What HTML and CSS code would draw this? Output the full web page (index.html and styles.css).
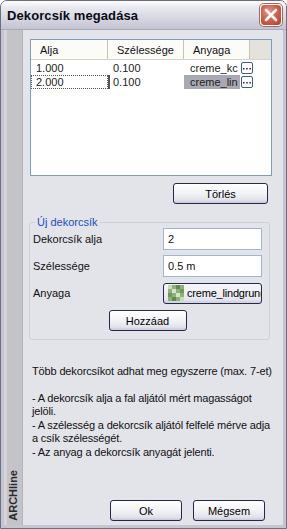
FILE: index.html
```html
<!DOCTYPE html>
<html>
<head>
<meta charset="utf-8">
<link rel="stylesheet" href="styles.css">
</head>
<body>
<div class="window">
  <div class="titlebar">
    <span class="title">Dekorcsík megadása</span>
    <span class="close"><svg width="14" height="14" viewBox="0 0 14 14"><path d="M2 2 L12 12 M12 2 L2 12" stroke="#fff" stroke-width="2.6" stroke-linecap="round"/></svg></span>
  </div>
  <div class="body">
    <div class="sidebar"><span class="brand">ARCHline</span></div>
    <div class="content">
      <div class="list">
        <div class="lhead">
          <span class="hc c1">Alja</span>
          <span class="hc c2">Szélessége</span>
          <span class="hc c3">Anyaga</span>
          <span class="hc c4"></span>
        </div>
        <div class="lrow">
          <span class="cell c1">1.000</span>
          <span class="cell c2">0.100</span>
          <span class="cell c3"><span class="mat">creme_kc</span><span class="ell"><svg width="8" height="3" viewBox="0 0 8 3"><rect x="0" y="1" width="1.5" height="1.5" fill="#223"/><rect x="3.2" y="1" width="1.5" height="1.5" fill="#223"/><rect x="6.4" y="1" width="1.5" height="1.5" fill="#223"/></svg></span></span>
        </div>
        <div class="lrow">
          <span class="cell c1 focus">2.000</span>
          <span class="cell c2 sep">0.100</span>
          <span class="cell c3"><span class="mat sel">creme_lin</span><span class="ell"><svg width="8" height="3" viewBox="0 0 8 3"><rect x="0" y="1" width="1.5" height="1.5" fill="#223"/><rect x="3.2" y="1" width="1.5" height="1.5" fill="#223"/><rect x="6.4" y="1" width="1.5" height="1.5" fill="#223"/></svg></span></span>
        </div>
      </div>
      <div class="btnrow right">
        <button class="btn torles">Törlés</button>
      </div>
      <fieldset class="group">
        <legend>Új dekorcsík</legend>
        <div class="frow"><label>Dekorcsík alja</label><span class="input">2</span></div>
        <div class="frow"><label>Szélessége</label><span class="input">0.5 m</span></div>
        <div class="frow"><label>Anyaga</label><span class="matbtn"><svg width="16" height="16" viewBox="0 0 16 16"><rect width="16" height="16" fill="#8fb07a"/><rect x="0" y="0" width="4" height="4" fill="#c9dcb8"/><rect x="8" y="0" width="4" height="4" fill="#5f8a50"/><rect x="4" y="4" width="4" height="4" fill="#d6e4c8"/><rect x="12" y="4" width="4" height="4" fill="#6e9a5e"/><rect x="0" y="8" width="4" height="4" fill="#6e9a5e"/><rect x="8" y="8" width="4" height="4" fill="#d6e4c8"/><rect x="4" y="12" width="4" height="4" fill="#5f8a50"/><rect x="12" y="12" width="4" height="4" fill="#c9dcb8"/></svg><span class="mtext">creme_lindgrun(</span></span></div>
        <div class="btnrow center">
          <button class="btn hozza">Hozzáad</button>
        </div>
      </fieldset>
      <div class="help">
        <p>Több dekorcsíkot adhat meg egyszerre (max. 7-et)</p>
        <p>- A dekorcsík alja a fal aljától mért magasságot jelöli.<br>- A szélesség a dekorcsík aljától felfelé mérve adja a csík szélességét.<br>- Az anyag a dekorcsík anyagát jelenti.</p>
      </div>
      <div class="footer">
        <button class="btn ok">Ok</button>
        <button class="btn cancel">Mégsem</button>
      </div>
    </div>
  </div>
</div>
</body>
</html>
```

FILE: styles.css
```css
* { box-sizing: border-box; }
html, body { margin: 0; padding: 0; background: #fff; }
body { font-family: "Liberation Sans", Arial, sans-serif; font-size: 11px; color: #000; }

.window {
  width: 287px; height: 529px;
  display: flex; flex-direction: column;
  background: #e3e3ea;
  border: 1px solid #6f6f7f;
  border-radius: 7px 7px 0 0;
  overflow: hidden;
}
.titlebar {
  height: 29px; flex: none;
  display: flex; align-items: center; justify-content: space-between;
  padding: 0 4px 0 6px;
  background: linear-gradient(#fdfdfe 0%, #e7e7ef 25%, #d8d8e3 60%, #c3c3d2 100%);
  border-bottom: 1px solid #a9a9b8;
}
.title { font-weight: bold; font-size: 13px; color: #0a0a14; letter-spacing: 0.1px; }
.close {
  width: 22px; height: 22px; border-radius: 4px;
  border: 1px solid #fff;
  background: radial-gradient(circle at 40% 35%, #e89a8a 0%, #d2604c 45%, #b0422e 100%);
  display: flex; align-items: center; justify-content: center;
  box-shadow: 0 0 0 1px #a06a6a;
}
.body { flex: 1; display: flex; border-left: 3px solid #c6c6d2; border-right: 3px solid #c6c6d2; border-bottom: 3px solid #c6c6d2; }
.sidebar {
  width: 19px; flex: none;
  background: linear-gradient(90deg, #d4d4da 0, #d4d4da 3px, #c3c3c8 3px);
  border-right: 1px solid #b4b4bc;
  display: flex; align-items: flex-end; justify-content: center;
  padding-bottom: 4px;
}
.brand {
  writing-mode: vertical-rl; transform: rotate(180deg);
  font-weight: bold; font-size: 11px; color: #2a2a2a;
}
.content { flex: 1; padding: 9px 11px 0 7px; display: flex; flex-direction: column; }

.list {
  height: 137px; background: #fff;
  border: 1px solid #7f9db9;
}
.lhead { display: flex; height: 20px; background: #ebeae4; border-bottom: 1px solid #d6d3c8; }
.hc { display: flex; align-items: center; padding-left: 9px; border-right: 1px solid #c7c5b2; color: #111; background: #fbfbf8; }
.c1 { width: 77px; }
.c2 { width: 76px; }
.c3 { width: 66px; }
.hc.c4 { flex: 1; border-right: none; background: #e3e2dc; }
.lrow { display: flex; height: 14px; margin-top: 1px; }
.lrow + .lrow { margin-top: 0; }
.cell { display: flex; align-items: center; padding-left: 5px; height: 14px; color: #222; white-space: nowrap; }
.focus { border: 1px dotted #555; padding-left: 4px; }
.sep { border-left: 2px solid #555; padding-left: 3px; }
.cell.c3 { padding-left: 6px; width: 72px; }
.mat { height: 14px; display: flex; align-items: center; width: 50px; overflow: hidden; }
.mat.sel { background: #a9a9b4; margin-left: -6px; padding-left: 6px; width: 56px; }
.ell {
  width: 12px; height: 12px; margin-left: 1px; flex: none;
  border: 1px solid #3c5a9a; border-radius: 2px; background: #fff;
  display: flex; align-items: center; justify-content: center;
}

.btnrow { display: flex; }
.btnrow.right { justify-content: flex-end; padding-right: 4px; margin-top: 7px; }
.btnrow.center { justify-content: center; margin-top: 6px; }
.btn {
  font-family: "Liberation Sans", Arial, sans-serif; font-size: 11px; color: #000;
  height: 21px; padding: 0;
  border: 1px solid #24284a; border-radius: 3px;
  background: linear-gradient(#ffffff 0%, #f4f4f8 45%, #e2e2ea 85%, #c9c9d8 100%);
}
.torles { width: 95px; }
.hozza { width: 78px; }

.group {
  margin: 12px 2px 0 -1px; padding: 0 7px 5px 3px;
  border: 1px solid #cfcfd6; border-radius: 3px;
  height: 124px;
}
.group legend { color: #1b4fbd; padding: 0 2px; margin-left: 2px; }
.frow { display: flex; align-items: center; justify-content: space-between; height: 22px; margin-top: 5px; }
.group legend + .frow { margin-top: 0; }
.frow label { color: #111; }
.input {
  width: 99px; height: 22px; background: #fff; border: 1px solid #9eb6cf;
  display: flex; align-items: center; padding-left: 4px; color: #111;
}
.matbtn {
  width: 99px; height: 21px; border: 1px solid #24284a; border-radius: 3px;
  background: linear-gradient(#f7f7fa, #e6e6ee 80%, #cfcfdc);
  display: flex; align-items: center; padding-left: 4px; gap: 3px; overflow: hidden; white-space: nowrap;
}
.matbtn svg { flex: none; }
.mtext { letter-spacing: -0.2px; }

.help { margin-top: 25px; padding-left: 2px; line-height: 13.5px; color: #111; letter-spacing: -0.15px; }
.help p { margin: 0 0 13px 0; }

.footer { margin-top: auto; margin-bottom: 4px; display: flex; justify-content: flex-end; gap: 11px; padding-right: 7px; }
.ok { width: 72px; }
.cancel { width: 72px; }
```
